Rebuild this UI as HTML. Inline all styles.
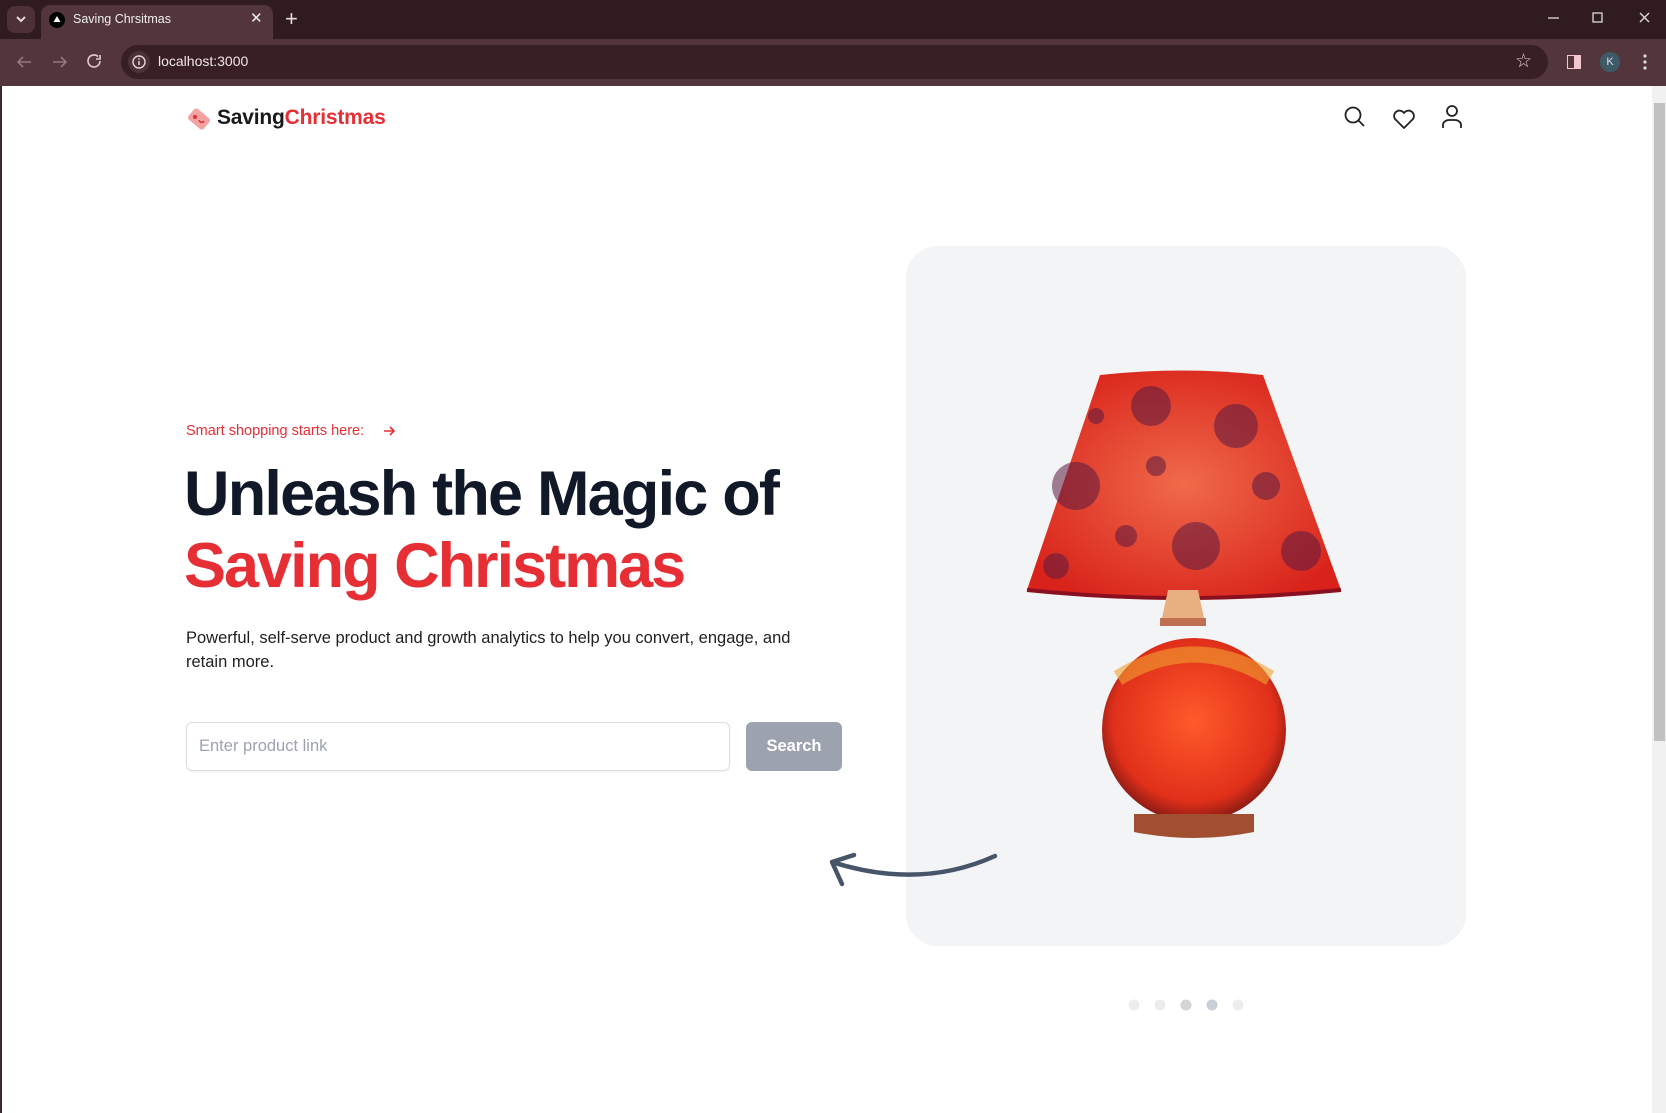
<!DOCTYPE html>
<html><head><meta charset="utf-8"><style>
*{margin:0;padding:0;box-sizing:border-box}
body{width:1666px;height:1113px;overflow:hidden;background:#fff;font-family:"Liberation Sans",sans-serif;position:relative}
.abs{position:absolute}
</style></head><body>
<!-- browser chrome -->
<div class="abs" style="left:0;top:0;width:1666px;height:40px;background:#301b21"></div>
<div class="abs" style="left:7px;top:6px;width:28px;height:27px;border-radius:8px;background:#4c3238"></div>
<svg class="abs" style="left:14px;top:14px" width="14" height="10"><path d="M3 3l4 4 4-4" stroke="#e8d8da" stroke-width="2" fill="none"/></svg>
<div class="abs" style="left:41px;top:5px;width:232px;height:35px;border-radius:9px 9px 0 0;background:#52363c"></div>
<div class="abs" style="left:49px;top:12px;width:16px;height:16px;border-radius:50%;background:#000"></div>
<svg class="abs" style="left:52px;top:14px" width="10" height="10"><path d="M5 2l3.5 6h-7z" fill="#fff"/></svg>
<div class="abs" style="left:73px;top:12px;color:#eee;font-size:12.5px">Saving Chrsitmas</div>
<div class="abs" style="left:250px;top:9px;color:#eee;font-size:15px">✕</div>
<div class="abs" style="left:285px;top:6px;color:#e8d8da;font-size:22px">+</div>
<svg class="abs" style="left:1545px;top:10px" width="110" height="20"><path d="M3 8h11" stroke="#ddd" stroke-width="1.3"/><rect x="48" y="3" width="9" height="9" fill="none" stroke="#ddd" stroke-width="1.3"/><path d="M95 3l9 9M104 3l-9 9" stroke="#ddd" stroke-width="1.3"/></svg>
<div class="abs" style="left:0;top:39px;width:1666px;height:47px;background:#52363c"></div>
<svg class="abs" style="left:14px;top:52px" width="90" height="20"><path d="M17 10H4m5-5L4 10l5 5" stroke="#8f7a7e" stroke-width="1.6" fill="none"/><path d="M39 10h13m-5-5l5 5-5 5" stroke="#8f7a7e" stroke-width="1.6" fill="none"/><path d="M86 9a6 6 0 1 1-2-4.5M86 3v4h-4" stroke="#e0cfd2" stroke-width="1.6" fill="none"/></svg>
<div class="abs" style="left:121px;top:45px;width:1427px;height:34px;border-radius:17px;background:#381f25"></div>
<div class="abs" style="left:128px;top:51px;width:22px;height:22px;border-radius:50%;background:#4c3238"></div>
<svg class="abs" style="left:131px;top:54px" width="16" height="16"><circle cx="8" cy="8" r="6" fill="none" stroke="#e6d6d8" stroke-width="1.4"/><path d="M8 7v4" stroke="#e6d6d8" stroke-width="1.5"/><circle cx="8" cy="5" r="0.9" fill="#e6d6d8"/></svg>
<div class="abs" style="left:158px;top:53px;color:#f0e6e8;font-size:14px">localhost:3000</div>
<div class="abs" style="left:1515px;top:50px;color:#e0d0d2;font-size:19px">☆</div>
<div class="abs" style="left:1567px;top:55px;width:14px;height:14px;border:1.5px solid #f2c7cf;background:linear-gradient(90deg,transparent 50%,#f2c7cf 50%)"></div>
<div class="abs" style="left:1600px;top:52px;width:20px;height:20px;border-radius:50%;background:#3d5a66;color:#dde;font-size:11px;text-align:center;line-height:20px">K</div>
<svg class="abs" style="left:1642px;top:53px" width="6" height="18"><circle cx="3" cy="3" r="1.6" fill="#ddd"/><circle cx="3" cy="9" r="1.6" fill="#ddd"/><circle cx="3" cy="15" r="1.6" fill="#ddd"/></svg>
<!-- scrollbar -->
<div class="abs" style="left:1652px;top:86px;width:14px;height:1027px;background:#f1f1f1"></div>
<div class="abs" style="left:1654px;top:103px;width:11px;height:638px;background:#c1c1c1"></div>
<div class="abs" style="left:0;top:86px;width:2px;height:1027px;background:#3a2a2e"></div>
<!-- header -->
<svg class="abs" style="left:186px;top:106px" width="26" height="26"><g transform="rotate(40 13 13)"><rect x="3" y="6" width="20" height="14" rx="3" fill="#f4a3a3"/></g><circle cx="9" cy="11" r="2" fill="#e62e35"/><path d="M13 14c1 3 4 3 5 1" stroke="#e62e35" stroke-width="1.5" fill="none"/></svg>
<div class="abs" style="left:217px;top:106px;font-size:21px;font-weight:bold;color:#1a1a1a;letter-spacing:-0.2px">Saving<span style="color:#e62e35">Christmas</span></div>
<svg class="abs" style="left:1342px;top:104px" width="130" height="28"><circle cx="11" cy="11" r="7.5" fill="none" stroke="#222" stroke-width="1.8"/><path d="M16.5 16.5L22 22" stroke="#222" stroke-width="1.8"/><path d="M62 24l-9-9a5.3 5.3 0 0 1 9-6a5.3 5.3 0 0 1 9 6z" fill="none" stroke="#222" stroke-width="1.8" stroke-linejoin="round"/><circle cx="110" cy="7" r="5" fill="none" stroke="#222" stroke-width="1.8"/><path d="M101 24v-3a6 5 0 0 1 6-5h6a6 5 0 0 1 6 5v3" fill="none" stroke="#222" stroke-width="1.8"/></svg>
<!-- hero -->
<div class="abs" style="left:186px;top:423px;font-size:14.5px;color:#e62e35">Smart shopping starts here:</div>
<svg class="abs" style="left:382px;top:424px" width="14" height="14"><path d="M2 7h10M8 3l4 4-4 4" stroke="#e62e35" stroke-width="1.6" fill="none"/></svg>
<div class="abs" style="left:184px;top:458px;font-size:63px;font-weight:bold;line-height:72px;color:#111827;letter-spacing:-1.8px;white-space:nowrap">Unleash the Magic of<br><span style="color:#e62e35;letter-spacing:-2px">Saving Christmas</span></div>
<div class="abs" style="left:186px;top:626px;width:635px;font-size:16.5px;line-height:24px;color:#1f1f1f">Powerful, self-serve product and growth analytics to help you convert, engage, and retain more.</div>
<div class="abs" style="left:186px;top:722px;width:544px;height:49px;border:1px solid #ddd;border-radius:6px;box-shadow:0 1px 2px rgba(0,0,0,.06);font-size:16.5px;color:#9ca3af;padding:14px 12px">Enter product link</div>
<div class="abs" style="left:746px;top:722px;width:96px;height:49px;border-radius:6px;background:#9ca3af;color:#fff;font-weight:bold;font-size:16.5px;text-align:center;line-height:49px">Search</div>
<!-- card -->
<div class="abs" style="left:906px;top:246px;width:560px;height:700px;border-radius:32px;background:#f3f4f6"></div>
<svg class="abs" style="left:906px;top:246px" width="560" height="700">
<defs><radialGradient id="sh" cx="50%" cy="50%" r="60%"><stop offset="0" stop-color="#f06a4a"/><stop offset="1" stop-color="#d8221a"/></radialGradient>
<radialGradient id="ba" cx="50%" cy="45%" r="55%"><stop offset="0" stop-color="#ff5a2a"/><stop offset=".8" stop-color="#e0301a"/><stop offset="1" stop-color="#8a1a14"/></radialGradient></defs>
<path d="M194 129Q276 120 357 129L435 344Q276 360 121 344Z" fill="url(#sh)"/>
<g fill="#5a1a40" opacity=".55"><circle cx="170" cy="240" r="24"/><circle cx="245" cy="160" r="20"/><circle cx="330" cy="180" r="22"/><circle cx="290" cy="300" r="24"/><circle cx="395" cy="305" r="20"/><circle cx="150" cy="320" r="13"/><circle cx="220" cy="290" r="11"/><circle cx="360" cy="240" r="14"/><circle cx="250" cy="220" r="10"/><circle cx="190" cy="170" r="8"/></g>
<path d="M121 344Q276 360 435 344" stroke="#8a1020" stroke-width="4" fill="none"/>
<path d="M262 344h30l6 28h-42z" fill="#e8b080"/>
<rect x="254" y="372" width="46" height="8" fill="#c07050"/>
<circle cx="288" cy="484" r="92" fill="url(#ba)"/>
<path d="M212 432Q288 385 364 432" stroke="#f0a030" stroke-width="16" fill="none" opacity=".6"/>
<path d="M228 568h120v18q-60 12-120 0z" fill="#a05030"/>
</svg>
<svg class="abs" style="left:820px;top:845px" width="180" height="45"><path d="M175 11Q100 45 12 17M12 17l22-7M12 17l10 22" stroke="#475569" stroke-width="4.5" fill="none" stroke-linecap="round"/></svg>
<svg class="abs" style="left:1125px;top:995px" width="125" height="20"><circle cx="9" cy="10" r="5.5" fill="#ececec"/><circle cx="35" cy="10" r="5.5" fill="#ececec"/><circle cx="61" cy="10" r="5.5" fill="#d4d4d4"/><circle cx="87" cy="10" r="5.5" fill="#cbd0d8"/><circle cx="113" cy="10" r="5.5" fill="#ececec"/></svg>
</body></html>
